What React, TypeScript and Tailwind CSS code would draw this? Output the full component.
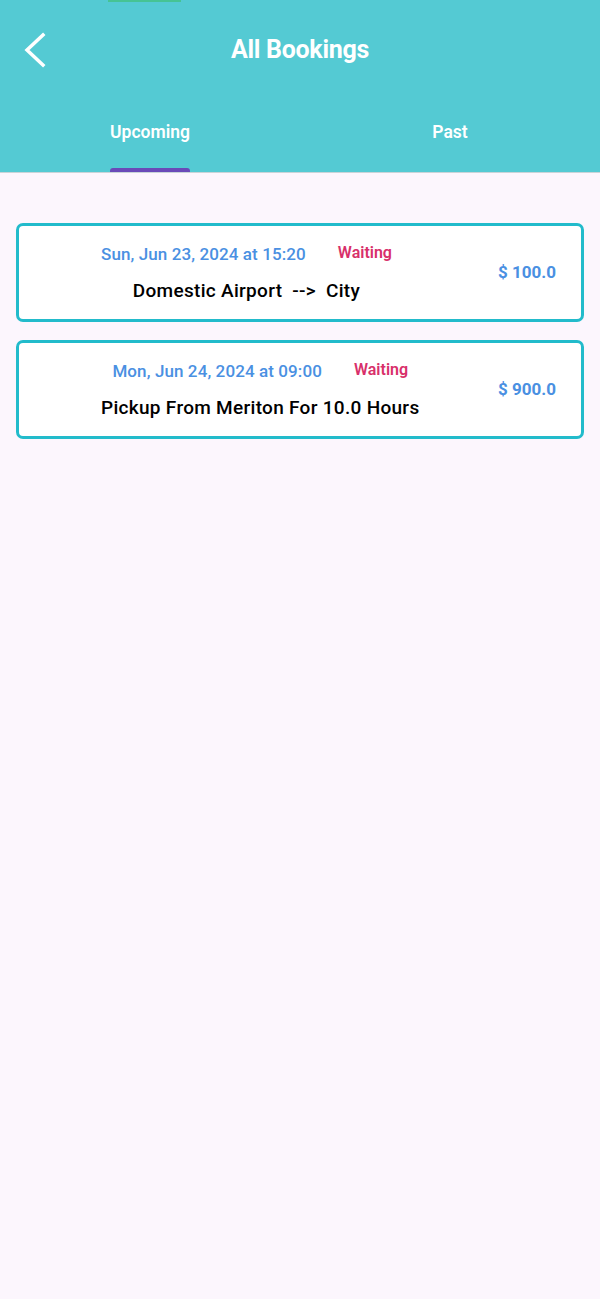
import React from "react";

function Card({ date, title, price }: { date: string; title: string; price: string }) {
  return (
    <div className="h-[99px] rounded-[7px] border-[3px] border-[#22BBCB] bg-white flex items-center justify-between pl-[82px] pr-[25px]">
      <div className="flex flex-col items-center">
        <div className="flex items-center h-[24px] mt-[3px]">
          <span className="text-[17px] font-medium text-[#4A90E2] tracking-[0.1px]">{date}</span>
          <span className="ml-[32px] -mt-[3px] text-[16px] font-semibold text-[#D8306A]">Waiting</span>
        </div>
        <div className="mt-[10px] text-[19px] font-medium text-black whitespace-pre tracking-[0.3px]">{title}</div>
      </div>
      <div className="text-[17px] font-bold text-[#4A90E2]">{price}</div>
    </div>
  );
}

export default function App() {
  return (
    <div className="w-[600px] h-[1299px] bg-[#FCF6FD] font-['Roboto',sans-serif]">
      <div className="bg-[#54CAD3] relative">
        <div className="absolute left-[108px] top-0 w-[73px] h-[2px] bg-[#46C394]" />
        <div className="h-[100px] flex items-center justify-center relative">
          <svg className="absolute left-[20px] top-[32px]" width="30" height="36" viewBox="0 0 30 36">
            <path d="M23 3 L7 18 L23 33" fill="none" stroke="white" strokeWidth="3.5" strokeLinecap="square" />
          </svg>
          <span className="text-white text-[25px] font-bold tracking-[-0.3px]">All Bookings</span>
        </div>
        <div className="h-[72px] flex">
          <div className="w-1/2 flex flex-col items-center">
            <div className="flex flex-col items-center h-full">
              <span className="mt-[19px] text-white text-[17.5px] font-semibold leading-[26px]">Upcoming</span>
              <div className="mt-auto w-[80px] h-[4px] rounded-t-[3px] bg-[#6A4AB8]" />
            </div>
          </div>
          <div className="w-1/2 flex justify-center">
            <span className="mt-[19px] text-white text-[17.5px] font-semibold leading-[26px]">Past</span>
          </div>
        </div>
        <div className="h-[1px] bg-[#C9D4D8]" />
      </div>
      <div className="px-[16px] pt-[50px] flex flex-col gap-[18px]">
        <Card date="Sun, Jun 23, 2024 at 15:20" title="Domestic Airport  -->  City" price="$ 100.0" />
        <Card date="Mon, Jun 24, 2024 at 09:00" title="Pickup From Meriton For 10.0 Hours" price="$ 900.0" />
      </div>
    </div>
  );
}
